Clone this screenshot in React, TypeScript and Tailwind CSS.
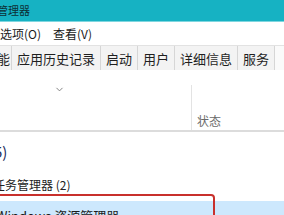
import { ChevronDown } from "lucide-react";

const font = { fontFamily: '"Noto Sans CJK SC", "Noto Sans", sans-serif' };

const tabs = ["性能", "应用历史记录", "启动", "用户", "详细信息", "服务"];

export default function App() {
  return (
    <div className="relative w-[284px] h-[215px] overflow-hidden bg-white text-[#1b1b1b]" style={font}>
      {/* title bar */}
      <div className="h-[22px] bg-[#16b2c3] flex items-center border-b border-[#7fd6df]">
        <span className="ml-[-25px] text-[11px] leading-none text-[#0d2f35] whitespace-nowrap">任务管理器</span>
      </div>

      {/* menu */}
      <div className="h-[23px] flex items-center gap-[12px] text-[12px] leading-none whitespace-nowrap">
        <span>选项(O)</span>
        <span>查看(V)</span>
      </div>

      {/* tabs */}
      <div className="h-[25px] flex items-stretch bg-[#f3f3f3] border-t border-[#e2e2e2] text-[13px] leading-none text-[#1f1f1f] whitespace-nowrap">
        {tabs.map((t, i) => (
          <div
            key={t}
            className={`flex items-center border-r border-[#d6d6d6] ${i === 0 ? "w-[12px] justify-end overflow-hidden pr-[1px]" : "px-[5px]"}`}
          >
            {t}
          </div>
        ))}
        <div className="flex-1 bg-[#fafafa]" />
      </div>

      {/* column header */}
      <div className="h-[62px] flex border-b-2 border-[#dcdcdc]">
        <div className="w-[191px] pt-[14px] pl-[54px]">
          <ChevronDown className="w-[11px] h-[11px] text-[#7a7a7a]" strokeWidth={2} />
        </div>
        <div className="flex-1 flex flex-col">
          <div className="h-[15px]" />
          <div className="flex-1 border-l border-[#e3e3e3] flex items-end pb-[3px] pl-[5px] text-[12px] leading-none text-[#6a6a6a]">
            状态
          </div>
        </div>
      </div>

      {/* groups */}
      <div className="h-[27px] flex items-end text-[15px] leading-none text-[#1d2e5c] whitespace-nowrap">
        <span className="ml-[-6px]">5)</span>
      </div>
      <div className="h-[42px] flex items-start pt-[20px] text-[12px] leading-none text-[#222] whitespace-nowrap">
        <span className="ml-[-7px]">任务管理器 (2)</span>
      </div>
      <div className="h-[20px] bg-[#cde8fd] flex items-start pt-[8px] text-[13px] leading-none whitespace-nowrap">
        <span className="ml-[-4px]">Windows 资源管理器</span>
      </div>

      {/* red highlight */}
      <div className="absolute left-[-20px] top-[194px] w-[235px] h-[60px] border-2 border-[#c8302c] rounded-[4px]" />
    </div>
  );
}
